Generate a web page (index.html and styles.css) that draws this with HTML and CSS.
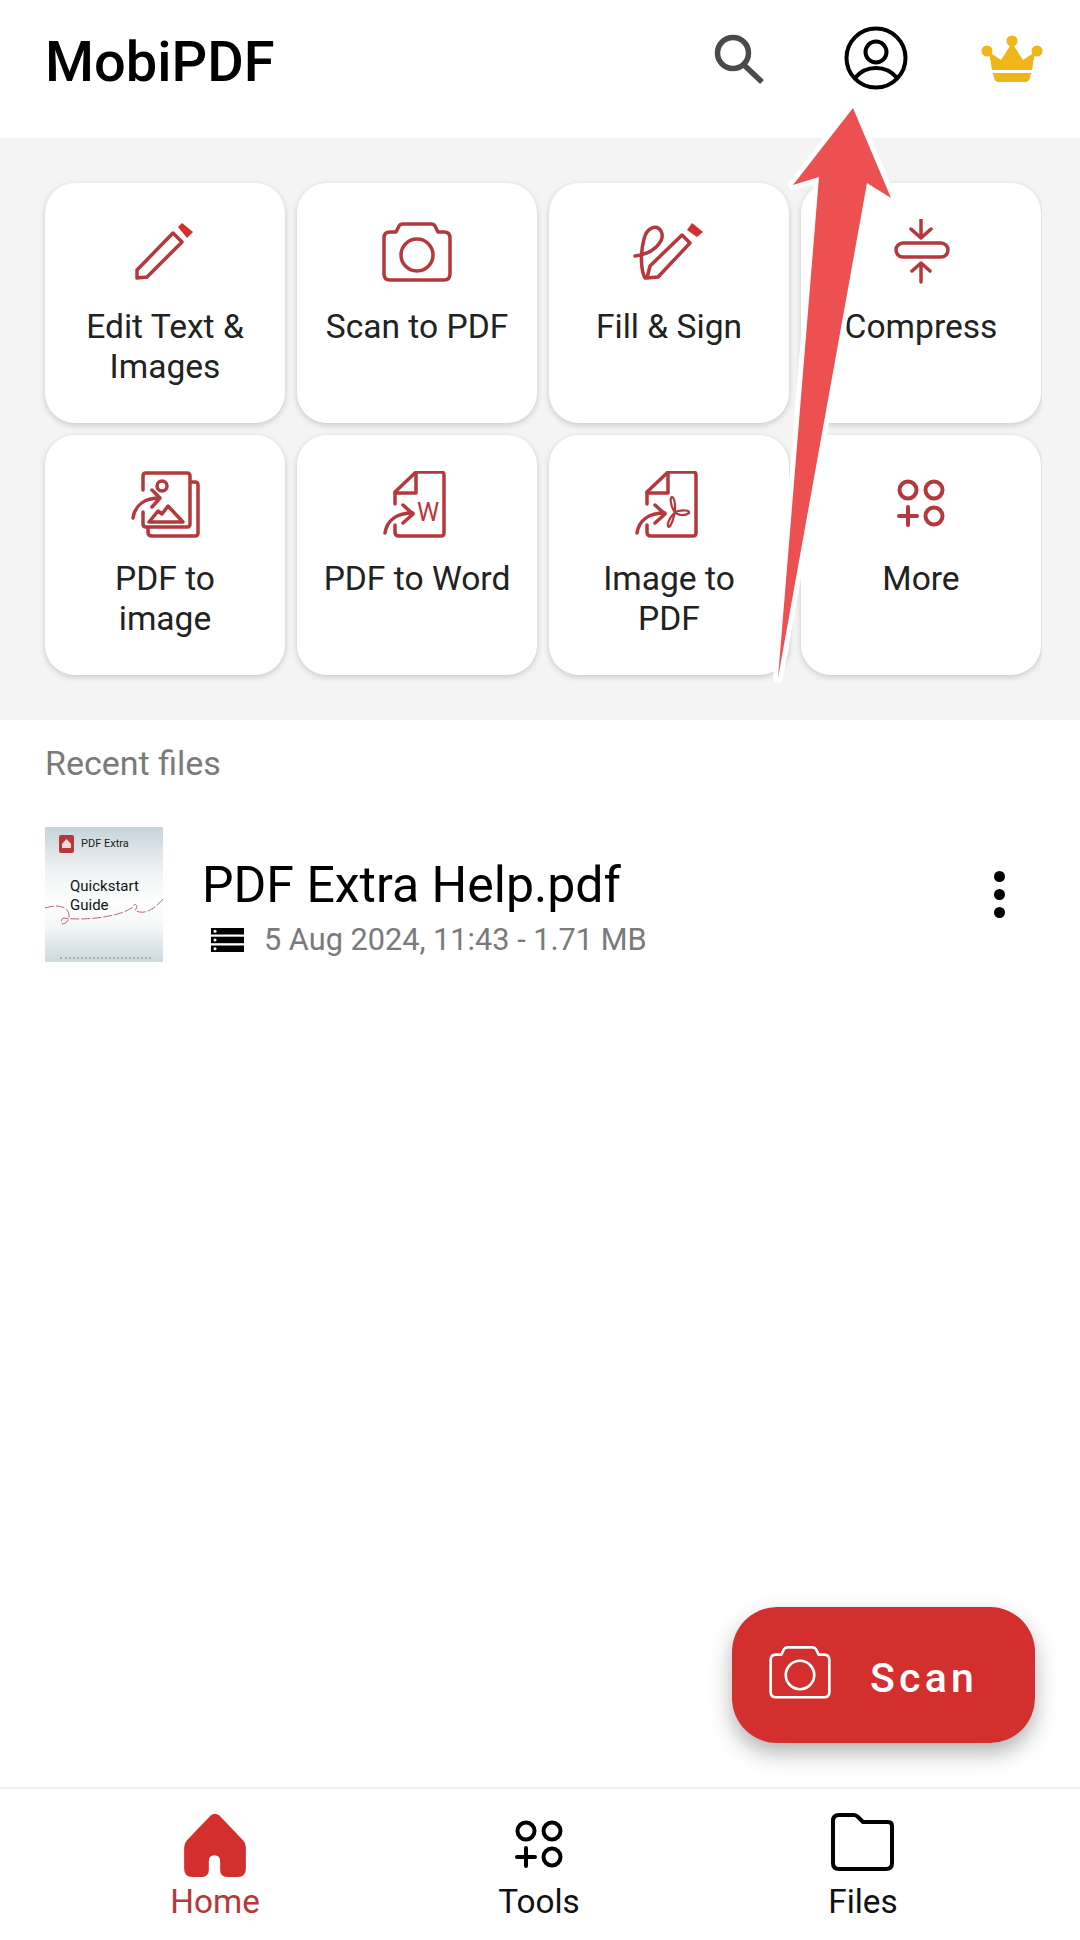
FILE: index.html
```html
<!DOCTYPE html>
<html lang="en">
<head>
<meta charset="utf-8">
<title>MobiPDF</title>
<link rel="stylesheet" href="styles.css">
</head>
<body>
<svg class="defs" width="0" height="0" aria-hidden="true">
  <symbol id="grid" viewBox="0 0 72 72">
    <circle cx="23" cy="19" r="8.5"/><circle cx="49" cy="19" r="8.5"/><circle cx="49" cy="45" r="8.5"/>
    <path d="M14 45H32M23 36V54"/>
  </symbol>
  <symbol id="camera" viewBox="0 0 72 72">
    <path d="M9 13H15L18 7Q19 5 22 5H50Q53 5 54 7L57 13H63Q69 13 69 19V55Q69 61 63 61H9Q3 61 3 55V19Q3 13 9 13Z"/>
    <circle cx="36" cy="36" r="16"/>
  </symbol>
</svg>
<div class="page">
  <header class="topbar">
    <h1 class="title">MobiPDF</h1>
    <div class="actions">
      <svg class="ic-search" viewBox="0 0 60 60"><circle cx="23" cy="25" r="15.5"/><path d="M34 37L52 54"/></svg>
      <svg class="ic-profile" viewBox="0 0 72 72"><circle cx="36" cy="36" r="29.5"/><circle cx="36" cy="30" r="10.5"/><path d="M15 56Q23 46 36 46Q49 46 57 56"/></svg>
      <svg class="ic-crown" viewBox="0 0 72 72"><circle cx="11" cy="29" r="5.500"/><circle cx="36" cy="19" r="5.500"/><circle cx="61" cy="29" r="5.500"/><path d="M13 30L25 38L36 21L47 38L59 30L56 48H16Z"/><path d="M17 51H55L54 56Q53 60 49 60H23Q19 60 18 56Z"/></svg>
    </div>
  </header>

  <section class="tools">
    <div class="tool-grid">
      <a class="tool">
        <svg class="ic" viewBox="0 0 72 72"><path d="M8 51L44 14L53 23L18 58L8 59Z"/><path class="solid" d="M49 8L53 4L64 13L58 19Z"/></svg>
        <span class="tool-label">Edit Text &amp;<br>Images</span>
      </a>
      <a class="tool">
        <svg class="ic"><use href="#camera"/></svg>
        <span class="tool-label">Scan to PDF</span>
      </a>
      <a class="tool">
        <svg class="ic" viewBox="0 0 72 72"><path d="M14 59L17 47L49 16L57 24L25 58Z"/><path class="solid" d="M54 11L59 4L70 13L64 18Z"/><path d="M2 37C20 35 33 22 28 12C24 5 14 8 11 20C7 35 8 52 12 59"/></svg>
        <span class="tool-label">Fill &amp; Sign</span>
      </a>
      <a class="tool">
        <svg class="ic" viewBox="0 0 72 72"><rect x="11" y="24" width="52" height="14" rx="7"/><path d="M36 1V19M26 10L36 19L46 10M36 63V44M27 52L36 44L45 52"/></svg>
        <span class="tool-label">Compress</span>
      </a>
      <a class="tool">
        <svg class="ic" viewBox="0 0 72 72"><path d="M14 19V5Q14 2 17 2H58Q61 2 61 5V53Q61 56 58 56H17Q14 56 14 53V41"/><path d="M62 11H66Q69 11 69 14V62Q69 65 66 65H23Q19 65 19 61V57"/><circle cx="33" cy="15" r="5"/><path d="M20 51H54L39 35L33 43L29 40Z"/><path d="M4 47C6 34 16 27 31 27M23 19L31 27L23 36"/></svg>
        <span class="tool-label">PDF to<br>image</span>
      </a>
      <a class="tool">
        <svg class="ic" viewBox="0 0 72 72"><path d="M14 33V21L35 1H60Q63 1 63 4V62Q63 65 60 65H18Q14 65 14 61V54"/><path d="M14 22H35V2"/><path d="M4 62C6 49 16 42 32 42M22 34L32 43L22 52"/><text class="ic-w" x="47" y="50">W</text></svg>
        <span class="tool-label">PDF to Word</span>
      </a>
      <a class="tool">
        <svg class="ic" viewBox="0 0 72 72"><path d="M14 33V21L35 1H60Q63 1 63 4V62Q63 65 60 65H18Q14 65 14 61V54"/><path d="M14 22H35V2"/><path d="M4 62C6 49 16 42 32 42M22 34L32 43L22 52"/><path class="thin" d="M39 26C37 26 37 33 41 40C45 45 52 45 56 42C57 39 50 39 45 40C40 41 34 51 35 55C36 58 39 53 41 45C43 37 42 27 39 26Z"/></svg>
        <span class="tool-label">Image to<br>PDF</span>
      </a>
      <a class="tool">
        <svg class="ic ic-grid"><use href="#grid"/></svg>
        <span class="tool-label">More</span>
      </a>
    </div>
  </section>

  <main class="recent">
    <h2 class="recent-title">Recent files</h2>
    <div class="file">
      <div class="thumb">
        <div class="thumb-brand">
          <svg class="thumb-logo" viewBox="0 0 15 18"><rect width="15" height="18" rx="2"/><path d="M7.500 4L12 9V13H3V9Z"/></svg>
          <span>PDF Extra</span>
        </div>
        <div class="thumb-title">Quickstart<br>Guide</div>
        <svg class="thumb-swirl" viewBox="0 0 118 40"><path d="M0 9C12 5 25 7 24 18C22 28 12 26 18 19C40 22 75 18 88 8C90 2 94 8 90 11C98 17 110 10 118 0"/></svg>
        <div class="thumb-foot"></div>
      </div>
      <div class="file-info">
        <div class="file-name">PDF Extra Help.pdf</div>
        <div class="file-meta">
          <svg class="ic-storage" viewBox="0 0 33 24"><rect width="33" height="6.500"/><rect y="8.700" width="33" height="6.500"/><rect y="17.500" width="33" height="6.500"/><circle class="hole" cx="4" cy="3.200" r="1.500"/><circle class="hole" cx="4" cy="12" r="1.500"/><circle class="hole" cx="4" cy="20.800" r="1.500"/></svg>
          <span>5 Aug 2024, 11:43 - 1.71 MB</span>
        </div>
      </div>
      <div class="kebab"><i></i><i></i><i></i></div>
    </div>
    <button class="fab">
      <svg class="fab-ic"><use href="#camera"/></svg>
      <span>Scan</span>
    </button>
  </main>

  <nav class="bottom">
    <a class="nav-item active">
      <svg class="nav-ic" viewBox="-5 -6 70 70"><path d="M26 2Q30 -1 34 2L57 26Q60 29 60 33V54Q60 62 52 62H42Q35 62 35 55V47Q35 41 29.500 41Q24 41 24 47V55Q24 62 17 62H8Q0 62 0 54V33Q0 29 3 26Z"/></svg>
      <span>Home</span>
    </a>
    <a class="nav-item">
      <svg class="nav-ic nav-grid" viewBox="0 -5 72 72"><use href="#grid"/></svg>
      <span>Tools</span>
    </a>
    <a class="nav-item">
      <svg class="nav-ic nav-folder" viewBox="-2 -4 72 72"><path d="M4 10Q4 4 10 4H25Q27 4 29 6L34 11H59Q63 11 63 15V52Q63 58 57 58H10Q4 58 4 52Z"/></svg>
      <span>Files</span>
    </a>
  </nav>

  <svg class="arrow" viewBox="0 0 1080 1940"><path d="M853 108L891 198L867 183L778 678L819 177L793 185Z"/></svg>
</div>
</body>
</html>
```

FILE: styles.css
```css
* { box-sizing: border-box; }
html, body { margin: 0; padding: 0; background: #fff; }
body { font-family: Roboto, "Liberation Sans", sans-serif; color: #222; }
.defs { position: absolute; }
.page { position: relative; width: 1080px; height: 1940px; display: flex; flex-direction: column; overflow: hidden; }

.topbar { height: 138px; flex: none; display: flex; align-items: center; justify-content: space-between; padding: 0 32px 22px 45px; }
.title { margin: 8px 0 0; font-size: 56px; line-height: 64px; font-weight: 500; color: #000; }
.actions { display: flex; align-items: center; gap: 70px; }
.actions svg { display: block; }
.ic-search { width: 60px; height: 60px; fill: none; stroke: #4a4a4a; stroke-width: 5.500; }
.ic-profile { width: 72px; height: 72px; fill: none; stroke: #000; stroke-width: 4; margin-right: -6px; }
.ic-crown { width: 72px; height: 72px; fill: #f0b518; }

.tools { flex: none; height: 582px; background: #f4f4f4; padding: 45px 0 0 45px; }
.tool-grid { display: grid; grid-template-columns: repeat(4, 240px); grid-auto-rows: 240px; gap: 12px; clip-path: inset(-20px -1px -20px -20px); width: 996px; }
.tool { background: #fff; border-radius: 30px; box-shadow: 0 2px 6px rgba(0,0,0,.18); padding-top: 36px; display: flex; flex-direction: column; align-items: center; text-align: center; }
.ic { width: 72px; height: 72px; flex: none; fill: none; stroke: #b5383c; stroke-width: 3.500; stroke-linejoin: round; stroke-linecap: round; }
.ic .solid { fill: #d32f2f; stroke: none; }
.ic .thin { stroke-width: 2.200; }
.ic-grid { stroke-width: 4; }
.ic-w { font-family: Roboto, sans-serif; font-size: 25px; fill: #b5383c; stroke: none; text-anchor: middle; }
.tool-label { margin-top: 16px; font-size: 33.600px; line-height: 40px; color: #222; }

.recent { position: relative; flex: 1; padding: 23px 0 0 45px; }
.recent-title { margin: 0; font-size: 34px; line-height: 40px; font-weight: 400; color: #7a7a7a; }
.file { display: flex; align-items: flex-start; margin-top: 44px; padding-right: 75px; }
.thumb { position: relative; width: 118px; height: 135px; flex: none; padding: 8px 0 0 14px; background: linear-gradient(#c6d4da 0%, #eef2f3 32%, #fdfefe 55%, #f6f8f9 72%, #ccd9df 100%); overflow: hidden; }
.thumb-brand { display: flex; align-items: center; gap: 7px; font-size: 11px; line-height: 18px; color: #222; }
.thumb-logo { width: 15px; height: 18px; flex: none; fill: #b5383c; }
.thumb-logo path { fill: #f4d9da; }
.thumb-title { margin: 24px 0 0 11px; font-size: 15px; line-height: 19px; color: #111; }
.thumb-swirl { position: absolute; left: 0; top: 72px; width: 118px; height: 40px; fill: none; stroke: #a8444c; stroke-width: .8; stroke-dasharray: 9 2; }
.thumb-foot { position: absolute; left: 15px; right: 12px; bottom: 3px; border-top: 2px dotted #a5b1b7; }
.file-info { flex: 1; margin-left: 39px; padding-top: 28px; }
.file-name { font-size: 50px; line-height: 60px; color: #000; }
.file-meta { display: flex; align-items: center; margin-top: 5px; padding-left: 9px; font-size: 30.700px; line-height: 40px; color: #7a7a7a; }
.ic-storage { width: 33px; height: 24px; margin-right: 20px; flex: none; fill: #000; }
.ic-storage .hole { fill: #fff; }
.kebab { display: flex; flex-direction: column; gap: 7px; padding-top: 44px; }
.kebab i { display: block; width: 11px; height: 11px; border-radius: 50%; background: #000; }

.fab { position: absolute; right: 45px; top: 887px; width: 303px; height: 136px; border: 0; border-radius: 45px; background: #d32f2f; box-shadow: 0 10px 22px rgba(0,0,0,.3); display: flex; align-items: center; padding: 0 0 0 36px; color: #fff; font: 500 41px/48px Roboto, sans-serif; letter-spacing: 4.200px; }
.fab span { padding-top: 6px; }
.fab-ic { width: 64px; height: 64px; margin-right: 38px; fill: none; stroke: #fff; stroke-width: 3; }

.bottom { flex: none; height: 153px; border-top: 2px solid #f0f0f0; display: grid; grid-template-columns: repeat(3, 324px); padding-left: 53px; }
.nav-item { display: flex; flex-direction: column; align-items: center; font-size: 33.300px; line-height: 40px; color: #111; padding-top: 18px; }
.nav-item span { padding-top: 3px; }
.nav-item.active { color: #b5383c; }
.nav-ic { width: 72px; height: 72px; flex: none; display: block; }
.active .nav-ic { fill: #d32f2f; }
.nav-grid { fill: none; stroke: #000; stroke-width: 4; stroke-linecap: round; }
.nav-folder { fill: none; stroke: #000; stroke-width: 4; }

.arrow { position: absolute; left: 0; top: 0; width: 1080px; height: 1940px; pointer-events: none; fill: #ec5050; stroke: #fff; stroke-width: 10; stroke-linejoin: round; paint-order: stroke; }
```
